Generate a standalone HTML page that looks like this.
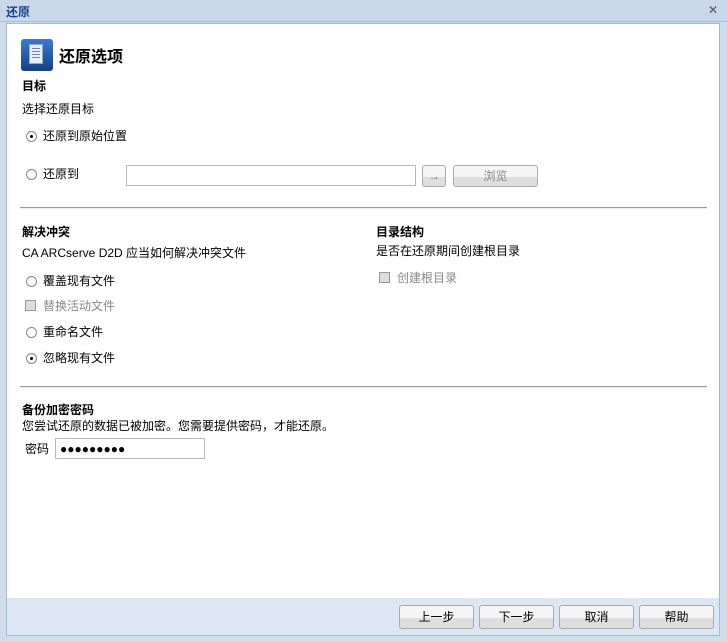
<!DOCTYPE html>
<html><head><meta charset="utf-8"><style>
*{margin:0;padding:0;box-sizing:border-box}
body{width:727px;height:642px;position:relative;background:#cfdcec;font-family:"Liberation Sans","Noto Sans CJK SC",sans-serif;font-size:12px;color:#000;overflow:hidden}
.a{position:absolute;white-space:nowrap}
.b{font-weight:bold}
.rad{position:absolute;width:11px;height:11px;border:1px solid #888;border-radius:50%;background:#fff}
.rad.on::after{content:"";position:absolute;left:3px;top:3px;width:3px;height:3px;background:#000;border-radius:50%}
.chk{position:absolute;width:11px;height:11px;border:1px solid #999;background:#ddd}
.btn{position:absolute;height:24px;border:1px solid #aaa;border-radius:3px;background:linear-gradient(#f6f4f6 55%,#dedede 55%);text-align:center;line-height:22px}
.hr{position:absolute;left:20px;width:687px;height:2px;border-top:1px solid #999;border-bottom:1px solid #eee}
.g{color:#888}
</style></head><body>
<div class="a" style="left:0;top:0;width:727px;height:22px;background:#c8d8ea;border-bottom:1px solid #a9bfd6"></div>
<div class="a b" style="left:6px;top:3px;color:#15428b">还原</div>
<div class="a" style="left:708px;top:4px;width:12px;height:12px;color:#555;font-size:12px;line-height:12px">✕</div>
<div class="a" style="left:6px;top:23px;width:714px;height:575px;background:#fff;border:1px solid #99bbe8;border-bottom:none"></div>
<div class="a" style="left:6px;top:598px;width:714px;height:38px;background:#dde7f3;border-left:1px solid #99bbe8;border-right:1px solid #99bbe8;border-bottom:1px solid #99bbe8"></div>
<div class="a" style="left:21px;top:39px;width:32px;height:32px;border-radius:3px;background:linear-gradient(#3a7bd5,#153f86)"></div>
<div class="a" style="left:29px;top:44px;width:14px;height:20px;background:#e8eef6;border:1px solid #9ab"></div>
<div class="a" style="left:32px;top:48px;width:8px;height:1px;background:#789;box-shadow:0 3px #789,0 6px #789,0 9px #789"></div>
<div class="a b" style="left:59px;top:43px;font-size:16px">还原选项</div>
<div class="a b" style="left:22px;top:77px">目标</div>
<div class="a" style="left:22px;top:100px">选择还原目标</div>
<div class="rad on" style="left:26px;top:131px"></div><div class="a" style="left:43px;top:127px">还原到原始位置</div>
<div class="rad" style="left:26px;top:169px"></div><div class="a" style="left:43px;top:165px">还原到</div>
<div class="a" style="left:126px;top:165px;width:290px;height:21px;border:1px solid #b5b8c8"></div>
<div class="btn" style="left:422px;top:165px;width:24px;height:22px;line-height:20px;color:#3a3;font-weight:bold">→</div>
<div class="btn g" style="left:453px;top:165px;width:85px;height:22px;line-height:20px">浏览</div>
<div class="hr" style="top:207px"></div>
<div class="a b" style="left:22px;top:223px">解决冲突</div>
<div class="a" style="left:22px;top:244px">CA ARCserve D2D 应当如何解决冲突文件</div>
<div class="rad" style="left:26px;top:276px"></div><div class="a" style="left:43px;top:272px">覆盖现有文件</div>
<div class="chk" style="left:25px;top:300px"></div><div class="a g" style="left:43px;top:297px">替换活动文件</div>
<div class="rad" style="left:26px;top:327px"></div><div class="a" style="left:43px;top:323px">重命名文件</div>
<div class="rad on" style="left:26px;top:353px"></div><div class="a" style="left:43px;top:349px">忽略现有文件</div>
<div class="a b" style="left:376px;top:223px">目录结构</div>
<div class="a" style="left:376px;top:242px">是否在还原期间创建根目录</div>
<div class="chk" style="left:379px;top:272px"></div><div class="a g" style="left:397px;top:269px">创建根目录</div>
<div class="hr" style="top:386px"></div>
<div class="a b" style="left:22px;top:401px">备份加密密码</div>
<div class="a" style="left:22px;top:417px">您尝试还原的数据已被加密。您需要提供密码，才能还原。</div>
<div class="a" style="left:25px;top:440px">密码</div>
<div class="a" style="left:55px;top:438px;width:150px;height:21px;border:1px solid #b5b8c8;padding:3px 4px;font-size:12px;line-height:14px">●●●●●●●●●</div>
<div class="btn" style="left:399px;top:605px;width:75px">上一步</div>
<div class="btn" style="left:479px;top:605px;width:75px">下一步</div>
<div class="btn" style="left:559px;top:605px;width:75px">取消</div>
<div class="btn" style="left:639px;top:605px;width:75px">帮助</div>
</body></html>
